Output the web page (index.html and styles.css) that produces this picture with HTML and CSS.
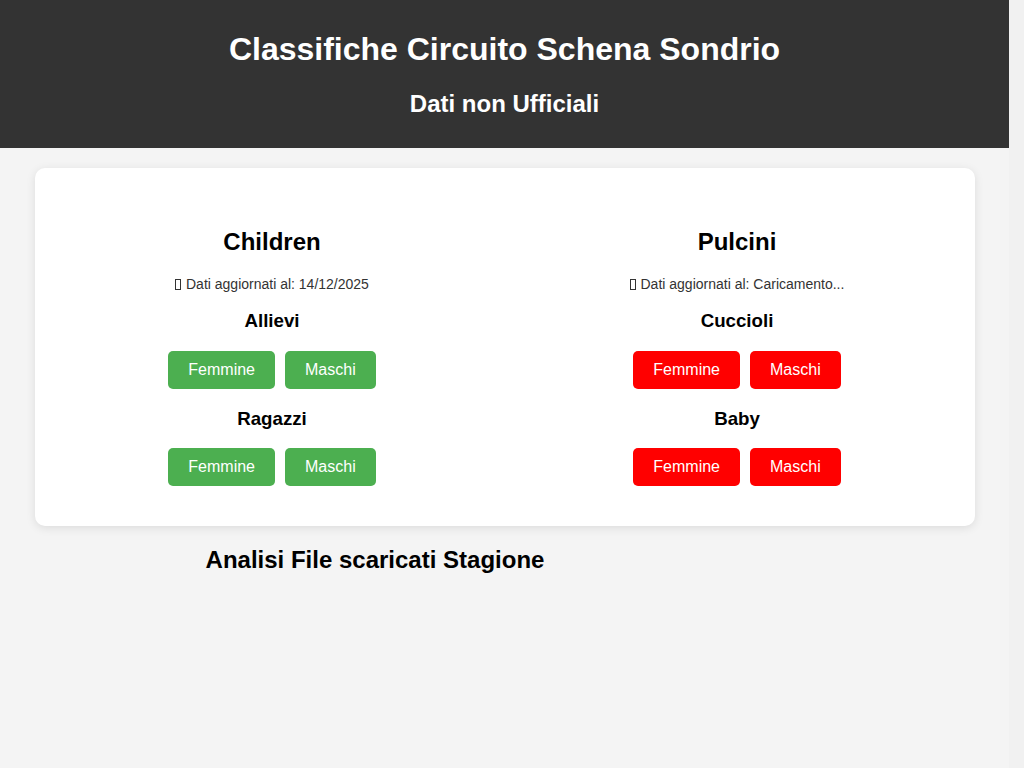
FILE: index.html
```html
<!DOCTYPE html>
<html lang="it">
<head>
<meta charset="utf-8">
<title>Classifiche Circuito Schena Sondrio</title>
<link rel="stylesheet" href="styles.css">
</head>
<body>
<header class="site-header">
  <h1>Classifiche Circuito Schena Sondrio</h1>
  <h2>Dati non Ufficiali</h2>
</header>
<main class="container">
  <section class="category">
    <h2>Children</h2>
    <p class="updated"><span class="tofu"></span> Dati aggiornati al: 14/12/2025</p>
    <h3>Allievi</h3>
    <div class="buttons">
      <button class="btn green">Femmine</button>
      <button class="btn green">Maschi</button>
    </div>
    <h3>Ragazzi</h3>
    <div class="buttons">
      <button class="btn green">Femmine</button>
      <button class="btn green">Maschi</button>
    </div>
  </section>
  <section class="category">
    <h2>Pulcini</h2>
    <p class="updated"><span class="tofu"></span> Dati aggiornati al: Caricamento...</p>
    <h3>Cuccioli</h3>
    <div class="buttons">
      <button class="btn red">Femmine</button>
      <button class="btn red">Maschi</button>
    </div>
    <h3>Baby</h3>
    <div class="buttons">
      <button class="btn red">Femmine</button>
      <button class="btn red">Maschi</button>
    </div>
  </section>
</main>
<section class="analysis">
  <h2>Analisi File scaricati Stagione</h2>
  <div class="chart-area"></div>
</section>
</body>
</html>
```
FILE: styles.css
```css
html {
  background: #f1f1f1;
}
html, body {
  margin: 0;
  padding: 0;
}
body {
  font-family: "Liberation Sans", Arial, sans-serif;
  background: #f4f4f4;
  color: #000;
  margin-right: 15px;
}
.site-header {
  background: #333333;
  color: #ffffff;
  text-align: center;
  padding: 10px 0;
}
.site-header h1 {
  font-size: 32px;
  margin: 21.44px 0;
}
.site-header h2 {
  font-size: 24px;
  margin: 19.92px 0;
}
.container {
  max-width: 900px;
  margin: 20px auto 0;
  padding: 20px;
  background: #ffffff;
  border-radius: 10px;
  box-shadow: 0 2px 10px rgba(0, 0, 0, 0.1);
  display: grid;
  grid-template-columns: 1fr 1fr;
  gap: 30px;
}
.category {
  padding: 20px;
  text-align: center;
}
.category h2 {
  font-size: 24px;
  margin: 19.92px 0;
}
.updated {
  font-size: 14px;
  color: #333;
  margin: 14px 0;
}
.tofu {
  display: inline-block;
  width: 4px;
  height: 9px;
  border: 1px solid #333;
  vertical-align: -1px;
  margin-right: 1px;
}
.category h3 {
  font-size: 18.72px;
  margin: 18.72px 0;
}
.buttons {
  display: flex;
  justify-content: center;
  gap: 10px;
}
.btn {
  font-family: "Liberation Sans", Arial, sans-serif;
  font-size: 16px;
  color: #fff;
  border: none;
  border-radius: 5px;
  padding: 10px 20px;
  line-height: 18px;
  cursor: pointer;
}
.btn.green { background: #4caf50; }
.btn.red { background: #ff0000; }
.analysis {
  width: 750px;
  text-align: center;
}
.analysis h2 {
  font-size: 24px;
  margin: 19.92px 0;
}
.chart-area {
  height: 331px;
}
```
